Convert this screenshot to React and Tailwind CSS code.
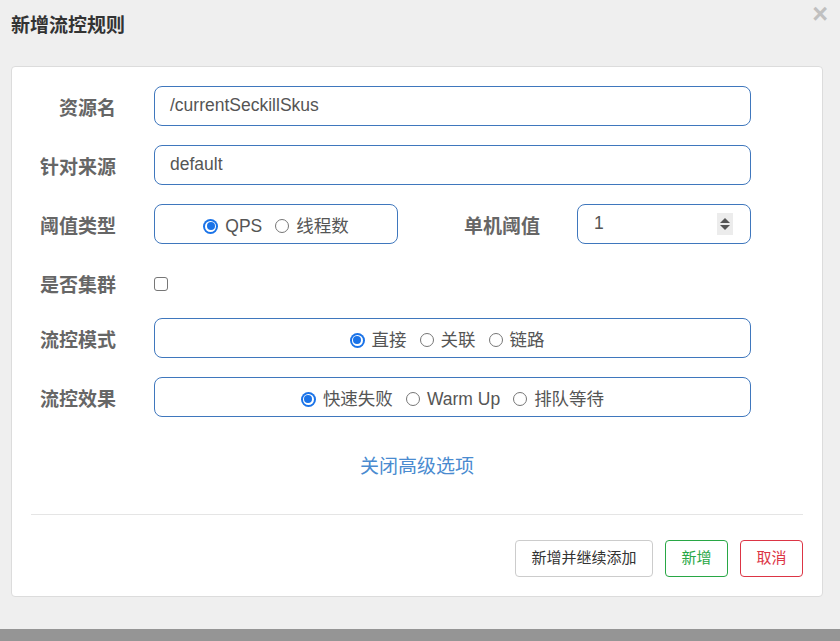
import React from "react";

const font = { fontFamily: '"Liberation Sans", "Noto Sans CJK SC", sans-serif' };

const Label = ({ children, className = "" }) => (
  <div
    className={`text-[19px] font-bold text-[#666] text-right leading-none pt-[4px] ${className}`}
  >
    {children}
  </div>
);

// drawn radio so the size matches the screenshot
const Dot = ({ checked }) =>
  checked ? (
    <span className="w-[15px] h-[15px] rounded-full bg-[#1a73e8] p-[2px] flex">
      <span className="flex-1 rounded-full bg-white p-[1.5px] flex">
        <span className="flex-1 rounded-full bg-[#1a73e8]" />
      </span>
    </span>
  ) : (
    <span className="w-[14px] h-[14px] rounded-full border border-[#767676] bg-white" />
  );

const Radio = ({ label, checked, first }) => (
  <label className={`flex items-center ${first ? "" : "ml-[13px]"}`}>
    <Dot checked={checked} />
    <span className="ml-[7px] text-[17.5px] text-[#555] leading-none pt-[2px]">
      {label}
    </span>
  </label>
);

const RadioBox = ({ options, className = "" }) => (
  <div
    className={`h-[40px] border border-[#3f77bd] rounded-[8px] flex items-center justify-center pt-[4px] ${className}`}
  >
    {options.map((o, i) => (
      <Radio key={o} label={o} checked={i === 0} first={i === 0} />
    ))}
  </div>
);

const TextBox = ({ value }) => (
  <div className="w-[597px] h-[40px] border border-[#3f77bd] rounded-[8px] flex items-center pl-[15px] text-[17.5px] text-[#555] pb-[1px]">
    {value}
  </div>
);

export default function App() {
  return (
    <div className="w-[840px] h-[641px] bg-[#efefef] flex flex-col" style={font}>
      {/* header */}
      <div className="h-[66px] flex items-start justify-between">
        <div className="pl-[11px] pt-[15px] text-[19px] font-bold text-[#333] leading-[22px]">
          新增流控规则
        </div>
        <div className="pr-[12px] pt-[2px] text-[27px] font-bold text-[#c0c0c0] leading-[24px]">
          ×
        </div>
      </div>

      {/* card */}
      <div className="ml-[11px] mr-[17px] h-[531px] bg-white border border-[#dcdcdc] rounded-[4px] flex flex-col pt-[19px] px-[19px]">
        <div className="flex items-center h-[40px]">
          <Label className="w-[85px]">资源名</Label>
          <div className="w-[38px]" />
          <TextBox value="/currentSeckillSkus" />
        </div>

        <div className="flex items-center h-[40px] mt-[19px]">
          <Label className="w-[85px]">针对来源</Label>
          <div className="w-[38px]" />
          <TextBox value="default" />
        </div>

        <div className="flex items-center h-[40px] mt-[19px]">
          <Label className="w-[85px]">阈值类型</Label>
          <div className="w-[38px]" />
          <RadioBox options={["QPS", "线程数"]} className="w-[244px]" />
          <Label className="w-[142px]">单机阈值</Label>
          <div className="w-[37px]" />
          <div className="w-[174px] h-[40px] border border-[#3f77bd] rounded-[8px] flex items-center justify-between pl-[16px] pr-[17px] text-[17.5px] text-[#555] pb-[2px]">
            <span>1</span>
            <div className="w-[16px] h-[22px] bg-[#ececec] flex flex-col items-center justify-center gap-[2px] mt-[2px]">
              <div className="w-0 h-0 border-l-[5px] border-r-[5px] border-b-[5px] border-l-transparent border-r-transparent border-b-[#555]" />
              <div className="w-0 h-0 border-l-[5px] border-r-[5px] border-t-[5px] border-l-transparent border-r-transparent border-t-[#555]" />
            </div>
          </div>
        </div>

        <div className="flex items-center h-[40px] mt-[19px]">
          <Label className="w-[85px]">是否集群</Label>
          <div className="w-[38px]" />
          <span className="w-[14px] h-[14px] rounded-[3px] border border-[#767676] bg-white mt-[2px]" />
        </div>

        <div className="flex items-center h-[40px] mt-[15px]">
          <Label className="w-[85px]">流控模式</Label>
          <div className="w-[38px]" />
          <RadioBox options={["直接", "关联", "链路"]} className="w-[597px] pr-[11px]" />
        </div>

        <div className="flex items-center h-[40px] mt-[19px]">
          <Label className="w-[85px]">流控效果</Label>
          <div className="w-[38px]" />
          <RadioBox
            options={["快速失败", "Warm Up", "排队等待"]}
            className="w-[597px]"
          />
        </div>

        <div className="flex justify-center mt-[38px]">
          <span className="text-[19px] text-[#4a8bd0] leading-[24px]">
            关闭高级选项
          </span>
        </div>

        <div className="h-px bg-[#e5e5e5] mt-[35px]" />

        <div className="flex justify-end gap-[12px] mt-[25px]">
          <button className="w-[138px] h-[37px] border border-[#cccccc] rounded-[4px] text-[15px] text-[#333] bg-white">
            新增并继续添加
          </button>
          <button className="w-[63px] h-[37px] border border-[#28a745] rounded-[4px] text-[15px] text-[#28a745] bg-white">
            新增
          </button>
          <button className="w-[63px] h-[37px] border border-[#dc3545] rounded-[4px] text-[15px] text-[#dc3545] bg-white">
            取消
          </button>
        </div>
      </div>

      <div className="flex-1" />
      <div className="h-[12px] bg-[#959595]" />
    </div>
  );
}
